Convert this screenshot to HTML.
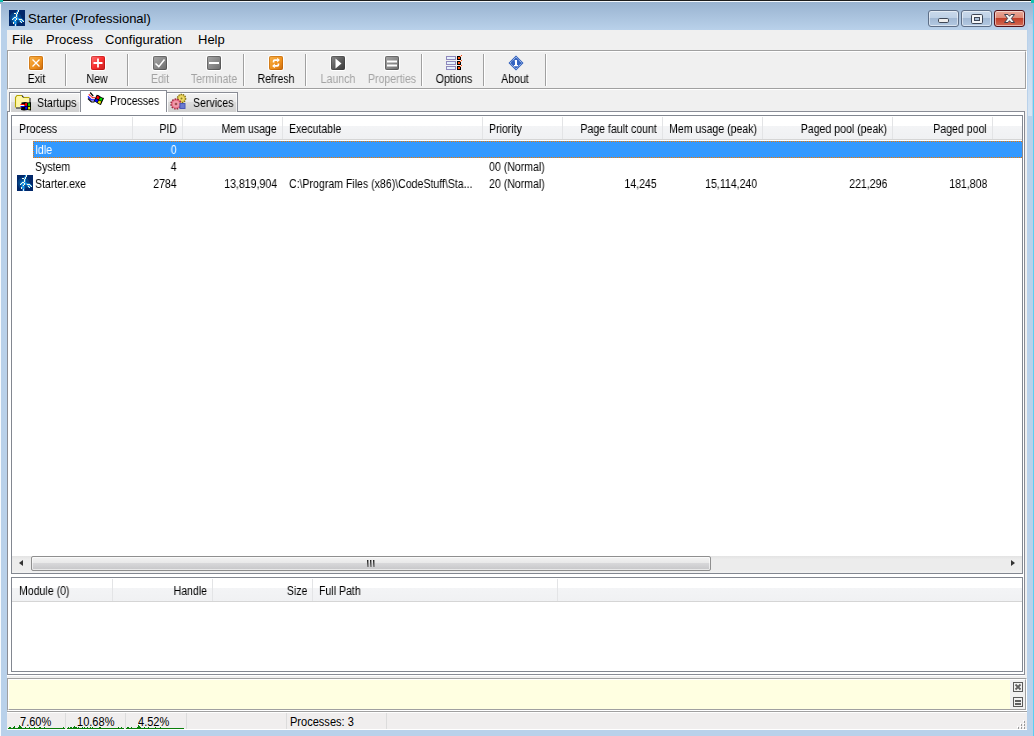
<!DOCTYPE html>
<html><head><meta charset="utf-8">
<style>
*{margin:0;padding:0;box-sizing:border-box}
html,body{width:1034px;height:736px;overflow:hidden;background:#b9d1ea}
body{position:relative;font-family:"Liberation Sans",sans-serif;font-size:11px;color:#000}
.a{position:absolute}
.t{position:absolute;white-space:nowrap;line-height:13px;font-size:12px;transform:scaleX(.88);transform-origin:0 0;will-change:transform}
.r{text-align:right;transform-origin:100% 0}
.m{position:absolute;white-space:nowrap;font-size:13px;line-height:15px}
.cb{width:31px;height:17px;border:1px solid #5d6e86;border-radius:3px;background:linear-gradient(#c9d9eb 0,#bed1e6 45%,#a2b9d4 50%,#b3c9e2 100%);box-shadow:inset 0 0 0 1px rgba(255,255,255,.5)}
.cc{border-color:#521018;background:linear-gradient(#eaa898 0,#df8a76 45%,#c3402a 50%,#d26a54 100%)}
.sep{position:absolute;top:54px;width:2px;height:32px;border-left:1px solid #a0a0a0;border-right:1px solid #fff}
.ico{position:absolute;top:56px;width:14px;height:14px;border-radius:2px;box-shadow:0 0 0 1px rgba(255,255,255,.9)}
.ico svg{position:absolute;left:0;top:0}
.org{background:linear-gradient(135deg,#f7b34c,#ee8f1c 60%,#c86a10);box-shadow:0 0 0 1px #fff,inset 0 0 0 1px rgba(180,90,0,.5)}
.red{background:linear-gradient(135deg,#ff7a7a,#f83030 50%,#c82020);box-shadow:0 0 0 1px #fff,inset 0 0 0 1px rgba(160,0,0,.4)}
.gry{background:linear-gradient(135deg,#a8a8a8,#858585 60%,#6a6a6a);box-shadow:0 0 0 1px #fff,inset 0 0 0 1px rgba(60,60,60,.5)}
.dk{background:linear-gradient(135deg,#8a8a8a,#555 60%,#3a3a3a)}
.tb{top:73px;text-align:center;line-height:13px;transform-origin:50% 0}
.dis{color:#a3a3a3}
.tab{border:1px solid #898c95;border-bottom:none;box-shadow:inset 1px 1px 0 #fff,inset -1px 0 0 rgba(255,255,255,.6);background:linear-gradient(#f3f3f3 0,#ebebeb 45%,#dddddd 50%,#cfcfcf 100%)}
.hs{position:absolute;top:117px;width:1px;height:22px;background:#e3e4e6}
.ssep{position:absolute;top:713px;width:1px;height:16px;background:#dcdcdc}
</style></head><body>
<!-- window frame -->
<div class="a" style="left:0;top:0;width:1034px;height:736px;background:#b9d1ea"></div>
<div class="a" style="left:0;top:2px;width:1034px;height:28px;background:linear-gradient(#99b3d0,#b9d1ea)"></div>
<div class="a" style="left:3px;top:0;width:1028px;height:1px;background:#1c1c1c"></div>
<div class="a" style="left:2px;top:1px;width:1030px;height:1px;background:#f4f8fc"></div>
<div class="a" style="left:0;top:4px;width:1px;height:732px;background:#f8fbfe"></div>
<div class="a" style="left:1033px;top:4px;width:1px;height:732px;background:#58cff2"></div>
<div class="a" style="left:0;top:0;width:3px;height:2px;background:#10c0b0"></div>
<div class="a" style="left:1031px;top:0;width:3px;height:3px;background:#10c0b0"></div>

<div class="a" style="left:1028px;top:24px;width:4px;height:92px;background:linear-gradient(#bcd2ea,#d6e5f4)"></div>
<!-- title -->
<div class="a" style="left:9px;top:10px;width:16px;height:16px"><svg width="16" height="16" viewBox="0 0 16 16"><rect width="16" height="16" fill="#02286a"/><circle cx="6.5" cy="8" r="6" fill="#0a5a9a" opacity="0.55"/><circle cx="6" cy="8" r="3.5" fill="#0d64a8" opacity="0.5"/><path d="M9.5 0L8 3L7.5 7.5L6 10.5L5 13M7.5 7.5L5.5 7.5L3.5 9.5M7.5 8L10.5 9.5H12.5L14.5 11.5M11 10.5L12.5 12.5M6.5 11V16" stroke="#22a8ff" stroke-width="2" fill="none" opacity="0.85"/><g fill="#fffbe2"><rect x="9" y="0" width="1" height="2"/><rect x="8" y="2" width="1" height="2"/><rect x="5" y="3" width="2" height="1"/><rect x="7" y="4" width="1" height="3"/><rect x="5" y="7" width="2" height="1"/><rect x="4" y="8" width="1" height="1"/><rect x="3" y="9" width="1" height="1"/><rect x="7" y="8" width="1" height="2"/><rect x="6" y="10" width="1" height="1"/><rect x="4" y="12" width="1" height="2"/><rect x="10" y="9" width="3" height="1"/><rect x="13" y="10" width="1" height="1"/><rect x="14" y="11" width="1" height="1"/><rect x="11" y="11" width="1" height="1"/><rect x="12" y="12" width="1" height="1"/><rect x="6" y="14" width="1" height="2" fill="#d8e8ff"/></g></svg></div>
<div class="m" style="left:28px;top:11px;color:#000">Starter (Professional)</div>

<!-- client -->
<div class="a" style="left:7px;top:30px;width:1020px;height:700px;background:#f0f0f0"></div>

<!-- caption buttons -->
<div class="a cb" style="left:928px;top:10px"><svg class="a" style="left:9px;top:7px" width="11" height="5" viewBox="0 0 11 5"><rect x="0.5" y="0.5" width="10" height="4" rx="1.2" fill="#eeeeee" stroke="#3e4756"/></svg></div>
<div class="a cb" style="left:961px;top:10px"><svg class="a" style="left:9px;top:3px" width="12" height="10" viewBox="0 0 12 10"><rect x="0.5" y="0.5" width="11" height="9" rx="1.2" fill="#f4f6f8" stroke="#3e4756"/><rect x="3.5" y="3.5" width="5" height="3" fill="#a9bdd6" stroke="#3e4756"/></svg></div>
<div class="a cb cc" style="left:994px;top:10px"><svg class="a" style="left:9px;top:3px" width="11" height="9" viewBox="0 0 11 9"><path d="M0.5 0.5H4L5.5 2.3L7 0.5H10.5L7.4 4.5L10.5 8.5H7L5.5 6.7L4 8.5H0.5L3.6 4.5Z" fill="#f6f6f6" stroke="#3a3e4c" stroke-width="1" stroke-linejoin="round"/></svg></div>

<!-- menu -->
<div class="m" style="left:12px;top:32px">File</div>
<div class="m" style="left:46px;top:32px">Process</div>
<div class="m" style="left:105px;top:32px">Configuration</div>
<div class="m" style="left:198px;top:32px">Help</div>

<!-- toolbar -->
<div class="a" style="left:7px;top:50px;width:1020px;height:40px;border-top:1px solid #a0a0a0;border-left:1px solid #a0a0a0;border-bottom:1px solid #fff;border-right:1px solid #fff"></div>
<div class="a" style="left:8px;top:51px;width:1018px;height:38px;border-top:1px solid #fff;border-left:1px solid #fff;border-bottom:1px solid #a0a0a0;border-right:1px solid #a0a0a0"></div>

<!-- toolbar separators -->
<div class="sep" style="left:65px"></div>
<div class="sep" style="left:127px"></div>
<div class="sep" style="left:243px"></div>
<div class="sep" style="left:305px"></div>
<div class="sep" style="left:421px"></div>
<div class="sep" style="left:483px"></div>
<div class="sep" style="left:545px"></div>
<!-- toolbar icons -->
<div class="ico org" style="left:29px"><svg width="14" height="14" viewBox="0 0 14 14"><path d="M3.5 3.5L10.5 10.5M10.5 3.5L3.5 10.5" stroke="#fff" stroke-width="1.3"/></svg></div>
<div class="ico red" style="left:91px"><svg width="14" height="14" viewBox="0 0 14 14"><path d="M7 2.5V11.5M2.5 7H11.5" stroke="#fff" stroke-width="1.8"/></svg></div>
<div class="ico gry" style="left:153px"><svg width="14" height="14" viewBox="0 0 14 14"><path d="M2.5 7.5L5.8 10.6L11.5 3.5" stroke="#fff" stroke-width="1.5" fill="none"/></svg></div>
<div class="ico gry" style="left:207px"><svg width="14" height="14" viewBox="0 0 14 14"><path d="M2 7H12" stroke="#fff" stroke-width="2"/></svg></div>
<div class="ico org" style="left:269px"><svg width="14" height="14" viewBox="0 0 14 14"><path d="M4.6 6.6V4.9Q4.6 4.1 5.6 4.1H8.6" stroke="#fff" stroke-width="1.7" fill="none"/><path d="M8.2 1.8L10.9 4.1L8.2 6.5Z" fill="#fff"/><path d="M9.4 7.4V9.1Q9.4 9.9 8.4 9.9H5.4" stroke="#fff" stroke-width="1.7" fill="none"/><path d="M5.8 7.5L3.1 9.9L5.8 12.2Z" fill="#fff"/></svg></div>
<div class="ico gry dk" style="left:331px"><svg width="14" height="14" viewBox="0 0 14 14"><path d="M4.5 2.5V12.5L10.5 7.5Z" fill="#fff"/></svg></div>
<div class="ico gry" style="left:385px"><svg width="14" height="14" viewBox="0 0 14 14"><path d="M2 5.5H12M2 9.5H12" stroke="#fff" stroke-width="1.8"/></svg></div>
<div class="a" style="left:444px;top:55px;width:19px;height:16px"><svg width="19" height="16" viewBox="0 0 19 16"><g transform="translate(0,0)"><rect x="2.5" y="1.5" width="9" height="3" fill="#e4f0fc" stroke="#8f88bc"/><rect x="13" y="1" width="4" height="4" fill="#000"/><rect x="14" y="2" width="2" height="2" fill="#ff5010"/><rect x="17" y="0" width="1" height="1" fill="#ff5010"/><rect x="16" y="1" width="1" height="1" fill="#ff7a40"/></g><g transform="translate(0,5)"><rect x="2.5" y="1.5" width="9" height="3" fill="#e4f0fc" stroke="#8f88bc"/><rect x="13" y="1" width="4" height="4" fill="#000"/><rect x="14" y="2" width="2" height="2" fill="#ff5010"/><rect x="17" y="0" width="1" height="1" fill="#ff5010"/><rect x="16" y="1" width="1" height="1" fill="#ff7a40"/></g><g transform="translate(0,10)"><rect x="2.5" y="1.5" width="9" height="3" fill="#e4f0fc" stroke="#8f88bc"/><rect x="13" y="1" width="4" height="4" fill="#000"/><rect x="14" y="2" width="2" height="2" fill="#ff5010"/><rect x="17" y="0" width="1" height="1" fill="#ff5010"/><rect x="16" y="1" width="1" height="1" fill="#ff7a40"/></g></svg></div>
<div class="a" style="left:508px;top:55px;width:16px;height:16px"><svg width="16" height="16" viewBox="0 0 16 16">
<path d="M8 0.5L15.5 8L8 15.5L0.5 8Z" fill="#2a5cbc"/>
<path d="M8 2.2L13.8 8L8 13.8L2.2 8Z" fill="none" stroke="#fff" stroke-width="1" stroke-dasharray="1.1 0.8" opacity="0.9"/>
<path d="M8 3.6L12.4 8L8 12.4L3.6 8Z" fill="#3565c2"/>
<path d="M7 5H9V10H10V11.3H6V10H7V6.3H6.5Z" fill="#fff"/>
</svg></div>
<!-- toolbar labels -->
<div class="t tb" style="left:8px;width:57px">Exit</div>
<div class="t tb" style="left:67px;width:60px">New</div>
<div class="t tb dis" style="left:130px;width:60px">Edit</div>
<div class="t tb dis" style="left:184px;width:60px">Terminate</div>
<div class="t tb" style="left:246px;width:60px">Refresh</div>
<div class="t tb dis" style="left:308px;width:60px">Launch</div>
<div class="t tb dis" style="left:362px;width:60px">Properties</div>
<div class="t tb" style="left:424px;width:60px">Options</div>
<div class="t tb" style="left:485px;width:60px">About</div>

<!-- tab panel -->
<div class="a" style="left:7px;top:111px;width:1018px;height:564px;border:1px solid #898c95;background:#fff"></div>
<div class="a" style="left:7px;top:675px;width:1018px;height:1px;background:#fff"></div>
<!-- tabs -->
<div class="a tab" style="left:9px;top:92px;width:72px;height:20px"></div>
<div class="a tab" style="left:166px;top:92px;width:72px;height:20px"></div>
<div class="a" style="left:80px;top:90px;width:87px;height:22px;border:1px solid #898c95;border-bottom:none;background:#fff"></div>
<div class="t" style="left:37px;top:97px">Startups</div>
<div class="t" style="left:110px;top:95px">Processes</div>
<div class="t" style="left:193px;top:97px">Services</div>

<!-- process listview -->
<div class="a" style="left:11px;top:115px;width:1012px;height:459px;border:1px solid #828790;background:#fff"></div>
<div class="a" style="left:12px;top:116px;width:1010px;height:24px;background:linear-gradient(#fff 0,#fff 10px,#f3f4f6 10px,#f0f1f3 100%);border-bottom:1px solid #d5d5d5"></div>
<div class="hs" style="left:132px"></div>
<div class="hs" style="left:182px"></div>
<div class="hs" style="left:282px"></div>
<div class="hs" style="left:482px"></div>
<div class="hs" style="left:562px"></div>
<div class="hs" style="left:662px"></div>
<div class="hs" style="left:762px"></div>
<div class="hs" style="left:892px"></div>
<div class="hs" style="left:992px"></div>
<div class="t" style="left:19px;top:123px">Process</div>
<div class="t r" style="right:857px;top:123px">PID</div>
<div class="t r" style="right:757px;top:123px">Mem usage</div>
<div class="t" style="left:289px;top:123px">Executable</div>
<div class="t" style="left:489px;top:123px">Priority</div>
<div class="t r" style="right:377px;top:123px">Page fault count</div>
<div class="t r" style="right:277px;top:123px">Mem usage (peak)</div>
<div class="t r" style="right:147px;top:123px">Paged pool (peak)</div>
<div class="t r" style="right:47px;top:123px">Paged pool</div>
<div class="a" style="left:33px;top:141px;width:989px;height:17px;background:#3399ff"></div>
<div class="a" style="left:33px;top:141px;width:989px;height:17px;border:1px dotted #f07800;border-right:none"></div>
<div class="t" style="left:35px;top:142px;line-height:17px;color:#fff">Idle</div>
<div class="t r" style="right:857px;top:142px;line-height:17px;color:#fff">0</div>
<div class="t" style="left:35px;top:159px;line-height:17px;color:#000">System</div>
<div class="t r" style="right:857px;top:159px;line-height:17px;color:#000">4</div>
<div class="t" style="left:489px;top:159px;line-height:17px;color:#000">00 (Normal)</div>
<div class="t" style="left:35px;top:176px;line-height:17px;color:#000">Starter.exe</div>
<div class="t r" style="right:857px;top:176px;line-height:17px;color:#000">2784</div>
<div class="t r" style="right:757px;top:176px;line-height:17px;color:#000">13,819,904</div>
<div class="t" style="left:289px;top:176px;line-height:17px;color:#000">C:\Program Files (x86)\CodeStuff\Sta...</div>
<div class="t" style="left:489px;top:176px;line-height:17px;color:#000">20 (Normal)</div>
<div class="t r" style="right:377px;top:176px;line-height:17px;color:#000">14,245</div>
<div class="t r" style="right:277px;top:176px;line-height:17px;color:#000">15,114,240</div>
<div class="t r" style="right:147px;top:176px;line-height:17px;color:#000">221,296</div>
<div class="t r" style="right:47px;top:176px;line-height:17px;color:#000">181,808</div>

<!-- h scrollbar -->
<div class="a" style="left:12px;top:556px;width:1010px;height:17px;background:linear-gradient(#e3e3e3,#ececec 20%,#ececec 80%,#f2f2f2)"></div>
<div class="a" style="left:31px;top:556px;width:680px;height:15px;border:1px solid #8f8f8f;border-radius:2px;background:linear-gradient(#f3f3f3 0,#e9e9e9 45%,#d7d7d9 50%,#c6c6c8 100%);box-shadow:inset 0 0 0 1px rgba(255,255,255,.6)"></div>
<div class="a" style="left:367px;top:560px;width:1px;height:7px;background:linear-gradient(#1a1a1a,#8a8a8a);box-shadow:1px 0 0 rgba(60,60,60,.45)"></div>
<div class="a" style="left:370px;top:560px;width:1px;height:7px;background:linear-gradient(#1a1a1a,#8a8a8a);box-shadow:1px 0 0 rgba(60,60,60,.45)"></div>
<div class="a" style="left:373px;top:560px;width:1px;height:7px;background:linear-gradient(#1a1a1a,#8a8a8a);box-shadow:1px 0 0 rgba(60,60,60,.45)"></div>
<div class="a" style="left:19px;top:560px;width:0;height:0;border-top:3.5px solid transparent;border-bottom:3.5px solid transparent;border-right:4px solid #333"></div>
<div class="a" style="left:1011px;top:560px;width:0;height:0;border-top:3.5px solid transparent;border-bottom:3.5px solid transparent;border-left:4px solid #333"></div>

<!-- module listview -->
<div class="a" style="left:11px;top:577px;width:1012px;height:95px;border:1px solid #828790;background:#fff"></div>
<div class="a" style="left:12px;top:578px;width:1010px;height:24px;background:linear-gradient(#fff 0,#fff 10px,#f3f4f6 10px,#f0f1f3 100%);border-bottom:1px solid #d5d5d5"></div>
<div class="hs" style="left:112px;top:579px"></div>
<div class="hs" style="left:212px;top:579px"></div>
<div class="hs" style="left:312px;top:579px"></div>
<div class="hs" style="left:557px;top:579px"></div>
<div class="t" style="left:19px;top:585px">Module (0)</div>
<div class="t r" style="right:827px;top:585px">Handle</div>
<div class="t r" style="right:727px;top:585px">Size</div>
<div class="t" style="left:319px;top:585px">Full Path</div>

<!-- info box -->
<div class="a" style="left:7px;top:678px;width:1020px;height:33px;border-top:1px solid #a0a0a0;border-left:1px solid #a0a0a0;border-bottom:1px solid #fff;border-right:1px solid #fff"></div>
<div class="a" style="left:8px;top:679px;width:1018px;height:31px;border-top:1px solid #fff;border-left:1px solid #fff;border-bottom:1px solid #a0a0a0;border-right:1px solid #a0a0a0"></div>
<div class="a" style="left:9px;top:680px;width:1001px;height:29px;background:#ffffe1"></div>
<div class="a" style="left:1013px;top:682px;width:10px;height:10px;border:1px solid #5a5a5a;background:#f0f0f0"><svg width="8" height="8" viewBox="0 0 8 8" style="position:absolute;left:0;top:0"><path d="M1.5 1.5L6.5 6.5M6.5 1.5L1.5 6.5" stroke="#606060" stroke-width="1.8"/></svg></div>
<div class="a" style="left:1013px;top:697px;width:10px;height:10px;border:1px solid #5a5a5a;background:#f0f0f0"><div class="a" style="left:1px;top:2px;width:6px;height:1px;background:#606060;box-shadow:0 1px 0 #606060,0 3px 0 #606060,0 4px 0 #606060"></div></div>

<!-- status bar -->
<div class="a" style="left:7px;top:711px;width:1020px;height:1px;background:#a0a0a0"></div>
<div class="a" style="left:7px;top:712px;width:1020px;height:18px;background:#f0eeee;border-top:1px solid #fff;border-bottom:1px solid #fff"></div>
<div class="ssep" style="left:65px"></div>
<div class="ssep" style="left:125px"></div>
<div class="ssep" style="left:186px"></div>
<div class="ssep" style="left:286px"></div>
<div class="ssep" style="left:386px"></div>
<div class="a" style="left:8px;top:728px;width:57px;height:1px;background:#0a7f0a"></div>
<div class="a" style="left:9px;top:727px;width:1px;height:1px;background:#0a7f0a"></div>
<div class="a" style="left:10px;top:727px;width:1px;height:1px;background:#0a7f0a"></div>
<div class="a" style="left:13px;top:727px;width:1px;height:1px;background:#0a7f0a"></div>
<div class="a" style="left:14px;top:726px;width:1px;height:2px;background:#0a7f0a"></div>
<div class="a" style="left:18px;top:727px;width:1px;height:1px;background:#0a7f0a"></div>
<div class="a" style="left:19px;top:725px;width:1px;height:3px;background:#0a7f0a"></div>
<div class="a" style="left:20px;top:726px;width:1px;height:2px;background:#0a7f0a"></div>
<div class="a" style="left:21px;top:727px;width:1px;height:1px;background:#0a7f0a"></div>
<div class="a" style="left:25px;top:727px;width:1px;height:1px;background:#0a7f0a"></div>
<div class="a" style="left:29px;top:727px;width:1px;height:1px;background:#0a7f0a"></div>
<div class="a" style="left:34px;top:727px;width:1px;height:1px;background:#0a7f0a"></div>
<div class="a" style="left:39px;top:727px;width:1px;height:1px;background:#0a7f0a"></div>
<div class="a" style="left:40px;top:727px;width:1px;height:1px;background:#0a7f0a"></div>
<div class="a" style="left:44px;top:727px;width:1px;height:1px;background:#0a7f0a"></div>
<div class="a" style="left:63px;top:727px;width:1px;height:1px;background:#0a7f0a"></div>
<div class="a" style="left:67px;top:728px;width:57px;height:1px;background:#0a7f0a"></div>
<div class="a" style="left:68px;top:727px;width:1px;height:1px;background:#0a7f0a"></div>
<div class="a" style="left:70px;top:727px;width:1px;height:1px;background:#0a7f0a"></div>
<div class="a" style="left:71px;top:727px;width:1px;height:1px;background:#0a7f0a"></div>
<div class="a" style="left:73px;top:727px;width:1px;height:1px;background:#0a7f0a"></div>
<div class="a" style="left:74px;top:726px;width:1px;height:2px;background:#0a7f0a"></div>
<div class="a" style="left:75px;top:727px;width:1px;height:1px;background:#0a7f0a"></div>
<div class="a" style="left:76px;top:727px;width:1px;height:1px;background:#0a7f0a"></div>
<div class="a" style="left:78px;top:727px;width:1px;height:1px;background:#0a7f0a"></div>
<div class="a" style="left:82px;top:727px;width:1px;height:1px;background:#0a7f0a"></div>
<div class="a" style="left:84px;top:727px;width:1px;height:1px;background:#0a7f0a"></div>
<div class="a" style="left:87px;top:727px;width:1px;height:1px;background:#0a7f0a"></div>
<div class="a" style="left:90px;top:727px;width:1px;height:1px;background:#0a7f0a"></div>
<div class="a" style="left:92px;top:727px;width:1px;height:1px;background:#0a7f0a"></div>
<div class="a" style="left:99px;top:727px;width:1px;height:1px;background:#0a7f0a"></div>
<div class="a" style="left:100px;top:727px;width:1px;height:1px;background:#0a7f0a"></div>
<div class="a" style="left:118px;top:727px;width:1px;height:1px;background:#0a7f0a"></div>
<div class="a" style="left:121px;top:727px;width:1px;height:1px;background:#0a7f0a"></div>
<div class="a" style="left:126px;top:728px;width:58px;height:1px;background:#0a7f0a"></div>
<div class="a" style="left:127px;top:727px;width:1px;height:1px;background:#0a7f0a"></div>
<div class="a" style="left:128px;top:727px;width:1px;height:1px;background:#0a7f0a"></div>
<div class="a" style="left:131px;top:727px;width:1px;height:1px;background:#0a7f0a"></div>
<div class="a" style="left:137px;top:727px;width:1px;height:1px;background:#0a7f0a"></div>
<div class="a" style="left:138px;top:725px;width:1px;height:3px;background:#0a7f0a"></div>
<div class="a" style="left:139px;top:726px;width:1px;height:2px;background:#0a7f0a"></div>
<div class="a" style="left:140px;top:727px;width:1px;height:1px;background:#0a7f0a"></div>
<div class="a" style="left:144px;top:727px;width:1px;height:1px;background:#0a7f0a"></div>
<div class="a" style="left:148px;top:727px;width:1px;height:1px;background:#0a7f0a"></div>
<div class="a" style="left:155px;top:727px;width:1px;height:1px;background:#0a7f0a"></div>
<div class="a" style="left:160px;top:727px;width:1px;height:1px;background:#0a7f0a"></div>
<div class="m" style="left:20px;top:715px;font-size:12px;transform:scaleX(.92);transform-origin:0 0">7.60%</div>
<div class="m" style="left:77px;top:715px;font-size:12px;transform:scaleX(.92);transform-origin:0 0">10.68%</div>
<div class="m" style="left:138px;top:715px;font-size:12px;transform:scaleX(.92);transform-origin:0 0">4.52%</div>
<div class="m" style="left:290px;top:715px;font-size:12px;transform:scaleX(.92);transform-origin:0 0">Processes: 3</div>
<div class="a" style="left:17px;top:175px;width:16px;height:16px"><svg width="16" height="16" viewBox="0 0 16 16"><rect width="16" height="16" fill="#02286a"/><circle cx="6.5" cy="8" r="6" fill="#0a5a9a" opacity="0.55"/><circle cx="6" cy="8" r="3.5" fill="#0d64a8" opacity="0.5"/><path d="M9.5 0L8 3L7.5 7.5L6 10.5L5 13M7.5 7.5L5.5 7.5L3.5 9.5M7.5 8L10.5 9.5H12.5L14.5 11.5M11 10.5L12.5 12.5M6.5 11V16" stroke="#22a8ff" stroke-width="2" fill="none" opacity="0.85"/><g fill="#fffbe2"><rect x="9" y="0" width="1" height="2"/><rect x="8" y="2" width="1" height="2"/><rect x="5" y="3" width="2" height="1"/><rect x="7" y="4" width="1" height="3"/><rect x="5" y="7" width="2" height="1"/><rect x="4" y="8" width="1" height="1"/><rect x="3" y="9" width="1" height="1"/><rect x="7" y="8" width="1" height="2"/><rect x="6" y="10" width="1" height="1"/><rect x="4" y="12" width="1" height="2"/><rect x="10" y="9" width="3" height="1"/><rect x="13" y="10" width="1" height="1"/><rect x="14" y="11" width="1" height="1"/><rect x="11" y="11" width="1" height="1"/><rect x="12" y="12" width="1" height="1"/><rect x="6" y="14" width="1" height="2" fill="#d8e8ff"/></g></svg></div>
<div class="a" style="left:14px;top:94px;width:18px;height:17px"><svg width="18" height="17" viewBox="0 0 18 17">
<path d="M1.5 13.5V3.5L3 1.5H8L9.5 3.5H15.5V13.5Z" fill="#fff7a6"/>
<path d="M1.5 13.5V3.5L3 1.5H8" stroke="#b4a400" stroke-width="1.1" fill="none"/>
<path d="M9.5 3.5H15.5" stroke="#b4a400" stroke-width="1.1"/>
<path d="M8 1.5L9.5 3.5" stroke="#111" stroke-width="1.1"/>
<path d="M16 4V9" stroke="#111" stroke-width="1"/>
<path d="M2 14H7" stroke="#111" stroke-width="1"/>
<path d="M7.5 8.5L11 8L14 8.5L17 8.3V16.5L13.5 16L10 16.5L7 16Z" fill="#000"/>
<path d="M11 9.2L13 9L13.2 11.8L11.2 12Z" fill="#f00"/>
<path d="M14 9.3L16 9.2L16.1 12L14.1 12.1Z" fill="#0c0"/>
<path d="M11.2 12.8L13.2 12.6L13.3 15.2L11.3 15.4Z" fill="#00f"/>
<path d="M14.1 12.9L16.1 12.8L16.2 15.3L14.2 15.4Z" fill="#ee0"/>
<path d="M6.5 10.5H10.5" stroke="#f00" stroke-width="1"/><path d="M6.5 11.5H10.5" stroke="#fff" stroke-width="1"/><path d="M6.5 12.5H10.5" stroke="#00f" stroke-width="1"/>
</svg></div>
<div class="a" style="left:87px;top:91px;width:19px;height:18px"><svg width="19" height="18" viewBox="0 0 19 18">
<path d="M3.2 1.5L6.2 5.2" stroke="#000" stroke-width="1.3"/>
<path d="M1.8 3.3L5.2 6.8H8" stroke="#f00" stroke-width="1.2" fill="none"/>
<path d="M2.4 4.6L5.4 7.7H8" stroke="#fff" stroke-width="0.8" fill="none"/>
<path d="M0.9 5.4L4.4 8.9H7.6" stroke="#00f" stroke-width="1.2" fill="none"/>
<path d="M1 7.5L4.4 11H7.4" stroke="#000" stroke-width="1.2" fill="none"/>
<g transform="translate(11.8,8.8) rotate(25) scale(0.78)">
<path d="M-5.2 -4.8Q-2.5 -5.6 0 -4.8Q2.5 -4 5.2 -4.8V4.8Q2.5 5.6 0 4.8Q-2.5 4 -5.2 4.8Z" fill="#000"/>
<rect x="-4" y="-3.8" width="3.4" height="3.4" fill="#f00"/>
<rect x="0.4" y="-3.5" width="3.4" height="3.4" fill="#0d0"/>
<rect x="-4" y="0.5" width="3.4" height="3.3" fill="#00f"/>
<rect x="0.4" y="0.7" width="3.4" height="3.3" fill="#ee0"/>
</g>
</svg></div>
<div class="a" style="left:170px;top:93px;width:18px;height:18px"><svg width="18" height="18" viewBox="0 0 18 18">
<g transform="translate(11.5,5.5)"><circle r="4.2" fill="#d9c24a" stroke="#7a6a10" stroke-width="1.2" stroke-dasharray="1.3 1"/><circle r="2.6" fill="#f0dc6a"/><circle r="1" fill="#8a7a20"/></g>
<g transform="translate(6,11)"><circle r="5" fill="#e8708a" stroke="#9a3040" stroke-width="1.5" stroke-dasharray="1.5 1.2"/><circle r="3.2" fill="#f09aaa"/><circle r="1.3" fill="#a05050"/></g>
<rect x="9.5" y="10" width="6" height="6" rx="0.5" fill="#4a5ab8"/><rect x="10.5" y="11" width="4" height="4" fill="#6a7ad0"/>
</svg></div>
<div class="a" style="left:1024px;top:721px;width:1px;height:2px;background:#9a9a9a;box-shadow:-1px -1px 0 #fff"></div>
<div class="a" style="left:1021px;top:724px;width:1px;height:2px;background:#9a9a9a;box-shadow:-1px -1px 0 #fff"></div>
<div class="a" style="left:1024px;top:724px;width:1px;height:2px;background:#9a9a9a;box-shadow:-1px -1px 0 #fff"></div>
<div class="a" style="left:1018px;top:727px;width:1px;height:2px;background:#9a9a9a;box-shadow:-1px -1px 0 #fff"></div>
<div class="a" style="left:1021px;top:727px;width:1px;height:2px;background:#9a9a9a;box-shadow:-1px -1px 0 #fff"></div>
<div class="a" style="left:1024px;top:727px;width:1px;height:2px;background:#9a9a9a;box-shadow:-1px -1px 0 #fff"></div>
</body></html>
